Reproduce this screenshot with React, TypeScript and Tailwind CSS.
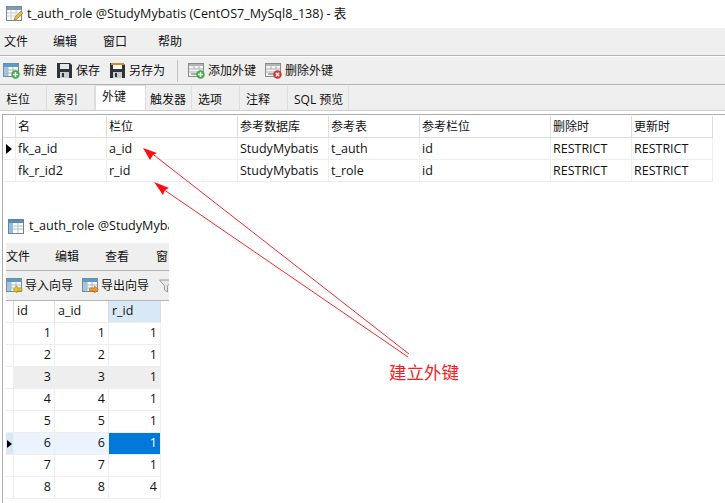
import React from 'react';

const fkRow = "grid grid-cols-[13px_91px_131px_91px_91px_131px_81px_81px] w-[710px]";
const dataRow = "grid grid-cols-[8px_41px_54px_52px] w-[155px]";

const fkRows = [
  ["fk_a_id", "a_id", "StudyMybatis", "t_auth", "id", "RESTRICT", "RESTRICT"],
  ["fk_r_id2", "r_id", "StudyMybatis", "t_role", "id", "RESTRICT", "RESTRICT"],
];

const dataRows = [
  [1, 1, 1],
  [2, 2, 1],
  [3, 3, 1],
  [4, 4, 1],
  [5, 5, 1],
  [6, 6, 1],
  [7, 7, 1],
  [8, 8, 4],
];

const tabs = [
  { label: "栏位", w: "w-[47px] pl-[6px]" },
  { label: "索引", w: "w-[48px] pl-[7px]" },
  { label: "外键", w: "w-[51px] pl-[6px]", active: true },
  { label: "触发器", w: "w-[46px] pl-[4px]" },
  { label: "选项", w: "w-[48px] pl-[6px]" },
  { label: "注释", w: "w-[48px] pl-[6px]" },
  { label: "SQL 预览", w: "w-[61px] pl-[6px]" },
];

// little grid icon with a blue title strip, badge goes on top
const GridIcon = ({ badge }: { badge?: "add" | "left" | "right" }) => (
  <svg width="17" height="17" viewBox="0 0 17 17" className="shrink-0">
    <rect x="0.5" y="1.5" width="15" height="13" fill="#fff" stroke="#7b8b96" />
    <rect x="1" y="2" width="14" height="3" fill="#5b9bc8" />
    <rect x="1" y="5" width="4" height="9" fill="#9cc6e4" />
    <path d="M5 8h10M5 11h10M5 5v9M10 5v9" stroke="#a9b4bb" strokeWidth="1" />
    {badge === "add" && (
      <>
        <circle cx="12.5" cy="12.5" r="4.2" fill="#3fae49" />
        <path d="M10 12.5h5M12.5 10v5" stroke="#fff" strokeWidth="1.4" />
      </>
    )}
    {badge === "left" && <path d="M7 12.5l4-3.5v2h5v3h-5v2z" fill="#e8c22e" stroke="#a88a12" strokeWidth="0.6" />}
    {badge === "right" && <path d="M16.5 12.5l-4-3.5v2h-5v3h5v2z" fill="#ee9a2a" stroke="#b56c10" strokeWidth="0.6" />}
  </svg>
);

const FloppyIcon = ({ orange }: { orange?: boolean }) => (
  <svg width="15" height="15" viewBox="0 0 15 15" className="shrink-0">
    <path d="M0 0h13l2 2v13H0z" fill="#2e3338" />
    <rect x="3" y="1" width="9" height="5" fill={orange ? "#ffffff" : "#e4e7ea"} />
    {orange && <rect x="1" y="0" width="13" height="2" fill="#e8822a" />}
    <rect x="3" y="9" width="9" height="6" fill="#c9cdd1" />
    <rect x="5" y="10" width="2" height="4" fill="#2e3338" />
  </svg>
);

const KeyIcon = ({ remove }: { remove?: boolean }) => (
  <svg width="17" height="17" viewBox="0 0 17 17" className="shrink-0">
    <rect x="0.5" y="1.5" width="15" height="13" fill="#f4f4f4" stroke="#8a8a8a" />
    <rect x="1" y="2" width="14" height="2" fill="#b5b5b5" />
    <path d="M1 7h14M1 10h14M6 4v3M11 4v3" stroke="#b0b0b0" strokeWidth="1" />
    <path d="M3 12h6" stroke="#777" strokeWidth="1.2" />
    <circle cx="12.5" cy="12.5" r="4.2" fill={remove ? "#c8383c" : "#3fae49"} />
    {remove ? (
      <path d="M10.8 10.8l3.4 3.4M14.2 10.8l-3.4 3.4" stroke="#fff" strokeWidth="1.3" />
    ) : (
      <path d="M10 12.5h5M12.5 10v5" stroke="#fff" strokeWidth="1.4" />
    )}
  </svg>
);

const TitleIcon = () => (
  <svg width="17" height="17" viewBox="0 0 17 17" className="shrink-0">
    <rect x="0.5" y="0.5" width="15" height="14" fill="#fff" stroke="#7b8b96" />
    <rect x="1" y="1" width="14" height="3" fill="#7c9db5" />
    <path d="M1 7h14M1 10h14M5 4v10M10 4v10" stroke="#c3ccd2" strokeWidth="1" />
    <path d="M8 14l1-3 6-6 2 2-6 6z" fill="#eab544" stroke="#a6761c" strokeWidth="0.6" />
  </svg>
);

const App = () => {
  return (
    <div className="relative w-[725px] h-[503px] overflow-hidden bg-white text-[12px] text-[#111] font-['Open_Sans','Noto_Sans_CJK_SC',sans-serif]">
      {/* window title */}
      <div className="h-[28px] flex items-center pl-[6px] gap-[4px] text-[12.6px]">
        <TitleIcon />
        <span>t_auth_role @StudyMybatis (CentOS7_MySql8_138) - 表</span>
      </div>

      {/* menu */}
      <div className="h-[27px] bg-[#efefef] flex items-center pl-[4px] text-[12px]">
        <span className="w-[49px]">文件</span>
        <span className="w-[50px]">编辑</span>
        <span className="w-[55px]">窗口</span>
        <span>帮助</span>
      </div>

      {/* toolbar */}
      <div className="border-t border-[#b5b5b5] pt-px">
        <div className="h-[27px] bg-[#efefef] border-b border-[#b5b5b5] flex items-center pl-[3px] box-content">
          <GridIcon badge="add" />
          <span className="ml-[3px]">新建</span>
          <span className="ml-[10px]"><FloppyIcon /></span>
          <span className="ml-[4px]">保存</span>
          <span className="ml-[10px]"><FloppyIcon orange /></span>
          <span className="ml-[4px]">另存为</span>
          <div className="w-px h-[22px] bg-[#c4c4c4] ml-[12px] mr-[10px]" />
          <KeyIcon />
          <span className="ml-[3px]">添加外键</span>
          <span className="ml-[9px]"><KeyIcon remove /></span>
          <span className="ml-[3px]">删除外键</span>
        </div>
      </div>

      {/* tabs */}
      <div className="h-[26px] bg-[#efefef] border-b border-[#cfcfcf] flex items-end">
        {tabs.map((t) => (
          <div
            key={t.label}
            className={
              t.active
                ? `${t.w} h-[25px] bg-white border-x border-t border-[#dcdcdc] flex items-center pb-[2px]`
                : `${t.w} h-[24px] border-r border-[#dedede] flex items-center pt-[3px]`
            }
          >
            {t.label}
          </div>
        ))}
      </div>

      {/* page body, the grey frame runs down the left side */}
      <div className="mt-[3px] ml-[2px] h-[389px] border-l border-t border-[#adadad]">
        <div className={`${fkRow} h-[23px] border-b border-[#dcdcdc] pt-px`}>
          <div className="border-r border-[#dcdcdc]" />
          {["名", "栏位", "参考数据库", "参考表", "参考栏位", "删除时", "更新时"].map((h) => (
            <div key={h} className="border-r border-[#dcdcdc] pl-[2px] flex items-center">
              {h}
            </div>
          ))}
        </div>
        {fkRows.map((row, i) => (
          <div key={row[0]} className={`${fkRow} h-[22px] border-b border-[#eeeeee] text-[12.5px]`}>
            <div className="border-r border-[#eeeeee] flex items-center justify-center">
              {i === 0 && (
                <svg width="6" height="10" viewBox="0 0 6 10">
                  <path d="M0 0l6 5-6 5z" fill="#000" />
                </svg>
              )}
            </div>
            {row.map((c, j) => (
              <div key={j} className="border-r border-[#eeeeee] pl-[2px] pt-px flex items-center">
                {c}
              </div>
            ))}
          </div>
        ))}

        {/* second window, cut off on the right */}
        <div className="mt-[33px] ml-[3px] w-[163px] overflow-hidden">
          <div className="h-[28px] flex items-center gap-[5px] pl-[5px] pb-[5px] whitespace-nowrap text-[12.6px] -ml-[3px]">
            <svg width="16" height="15" viewBox="0 0 16 15" className="shrink-0">
              <rect x="0.5" y="0.5" width="15" height="14" fill="#fff" stroke="#6f8291" />
              <rect x="1" y="1" width="14" height="3" fill="#4f8fba" />
              <rect x="1" y="4" width="4" height="10" fill="#8fc0e0" />
              <path d="M5 7h10M5 10h10M10 4v10" stroke="#b5bec5" strokeWidth="1" />
            </svg>
            <span>t_auth_role @StudyMybatis (CentOS7_MySql8_138)</span>
          </div>
          <div className="h-[27px] bg-[#efefef] border-b border-[#b5b5b5] flex items-center whitespace-nowrap box-content">
            <span className="w-[49px] shrink-0">文件</span>
            <span className="w-[50px] shrink-0">编辑</span>
            <span className="w-[51px] shrink-0">查看</span>
            <span className="shrink-0">窗口</span>
          </div>
          <div className="h-[30px] bg-[#efefef] border-b border-[#b5b5b5] flex items-center whitespace-nowrap">
            <GridIcon badge="left" />
            <span className="ml-[2px]">导入向导</span>
            <span className="ml-[9px]"><GridIcon badge="right" /></span>
            <span className="ml-[2px]">导出向导</span>
            <svg width="14" height="14" viewBox="0 0 14 14" className="ml-[10px] shrink-0">
              <path d="M0.5 1h13L8.5 7v6l-3-2V7z" fill="#e6e6e6" stroke="#9a9a9a" />
            </svg>
          </div>
          <div className={`${dataRow} h-[22px] border-b border-[#eeeeee] text-[12.5px]`}>
            <div className="border-r border-[#dcdcdc]" />
            <div className="border-r border-[#dcdcdc] pl-[3px] flex items-center">id</div>
            <div className="border-r border-[#dcdcdc] pl-[3px] flex items-center">a_id</div>
            <div className="border-r border-[#dcdcdc] pl-[3px] flex items-center bg-[#d8e8f6]">r_id</div>
          </div>
          {dataRows.map((r, i) => (
            <div
              key={r[0]}
              className={`${dataRow} h-[22px] border-b border-[#eeeeee] text-[12.5px] ${i === 2 ? "bg-[#eeeeee]" : ""} ${i === 5 ? "bg-[#ebf4fd]" : ""}`}
            >
              <div className={`border-r border-[#eeeeee] flex items-center justify-center ${i === 2 ? "bg-white" : ""} ${i === 5 ? "bg-[#d8e8f6]" : ""}`}>
                {i === 5 && (
                  <svg width="5" height="8" viewBox="0 0 5 8">
                    <path d="M0 0l5 4-5 4z" fill="#000" />
                  </svg>
                )}
              </div>
              <div className="border-r border-[#eeeeee] pr-[3px] flex items-center justify-end">{r[0]}</div>
              <div className="border-r border-[#eeeeee] pr-[3px] flex items-center justify-end">{r[1]}</div>
              <div className={`border-r border-[#eeeeee] pr-[3px] flex items-center justify-end ${i === 5 ? "bg-[#0078d7] text-white" : ""}`}>
                {r[2]}
              </div>
            </div>
          ))}
        </div>
      </div>

      {/* red annotation over the screenshot */}
      <svg width="725" height="503" className="absolute left-0 top-0 pointer-events-none">
        <path d="M409 354L150 152" stroke="#f5282c" strokeWidth="1" fill="none" />
        <path d="M408 357L160 187" stroke="#f5282c" strokeWidth="1" fill="none" />
        <path d="M143 148L157 153L153 155L150 160Z" fill="#fb0d12" />
        <path d="M154 182L169 188L165 190L163 195Z" fill="#fb0d12" />
      </svg>
      <div className="absolute left-[389px] top-[360px] text-[17.5px] leading-[24px] text-[#fb1a1e] font-['Noto_Sans_CJK_SC',sans-serif]">
        建立外键
      </div>
    </div>
  );
};

export default App;
